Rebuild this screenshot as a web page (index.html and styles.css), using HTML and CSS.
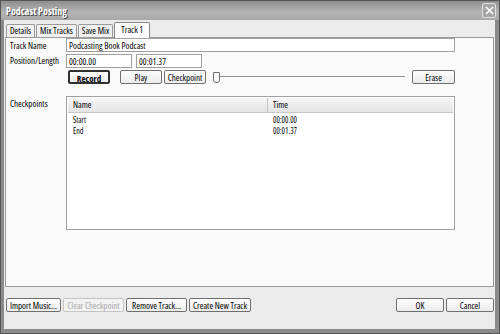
FILE: index.html
```html
<!DOCTYPE html>
<html lang="en">
<head>
  <meta charset="UTF-8">
  <title>Podcast Posting</title>
  <link rel="stylesheet" href="styles.css">
</head>
<body>
  <div class="window">
    <div class="titlebar">
      <span class="title">Podcast Posting</span>
      <span class="close">
        <svg width="9" height="9" viewBox="0 0 9 9"><path d="M1 1 L8 8 M8 1 L1 8" stroke="#fff" stroke-width="1.6"/></svg>
      </span>
    </div>
    <div class="client">
      <div class="tabs">
        <span class="tab">Details</span>
        <span class="tab">Mix Tracks</span>
        <span class="tab">Save Mix</span>
        <span class="tab active">Track 1</span>
      </div>
      <div class="panel">
        <div class="row first">
          <label class="label mid">Track Name</label>
          <div class="field"><input class="text wide" value="Podcasting Book Podcast"></div>
        </div>
        <div class="row">
          <label class="label">Position/Length</label>
          <div class="field pair">
            <input class="text short" value="00:00.00">
            <input class="text short" value="00:01.37">
          </div>
        </div>
        <div class="row">
          <span class="label"></span>
          <div class="field controls">
            <button class="btn small default">Record</button>
            <button class="btn small play">Play</button>
            <button class="btn small">Checkpoint</button>
            <div class="slider">
              <span class="thumb"></span>
              <span class="track"></span>
            </div>
            <button class="btn small erase">Erase</button>
          </div>
        </div>
        <div class="row list-row">
          <label class="label list-label">Checkpoints</label>
          <div class="field">
            <div class="list">
              <div class="list-head">
                <span class="col-name">Name</span>
                <span class="col-time">Time</span>
              </div>
              <div class="list-item"><span class="col-name">Start</span><span class="col-time">00:00.00</span></div>
              <div class="list-item"><span class="col-name">End</span><span class="col-time">00:01.37</span></div>
            </div>
          </div>
        </div>
      </div>
      <div class="footer">
        <button class="btn w55">Import Music...</button>
        <button class="btn w61" disabled>Clear Checkpoint</button>
        <button class="btn w61">Remove Track...</button>
        <button class="btn w62">Create New Track</button>
        <span class="spacer"></span>
        <button class="btn dlg">OK</button>
        <button class="btn dlg">Cancel</button>
      </div>
    </div>
  </div>
</body>
</html>
```

FILE: styles.css
```css
html, body {
  margin: 0;
  padding: 0;
  background: #fff;
}
body {
  font-family: "Open Sans", "Liberation Sans", Arial, sans-serif;
  font-stretch: 80%;
  font-weight: 500;
  font-size: 9px;
  color: #000;
}
.window {
  width: 500px;
  height: 334px;
  box-sizing: border-box;
  display: flex;
  flex-direction: column;
  background: #8a8a8a;
  border: 1px solid #555;
}
.titlebar {
  height: 19px;
  flex: none;
  display: flex;
  align-items: center;
  justify-content: space-between;
  padding: 0 3px 0 5px;
  background: linear-gradient(#8f8f8f, #b4b4b4 60%, #a8a8a8);
}
.title {
  font-weight: bold;
  font-size: 10px;
  color: #fff;
  text-shadow: 1px 1px 0 #444;
}
.close {
  width: 12px;
  height: 13px;
  border: 1px solid #e0e0e0;
  border-radius: 2px;
  display: flex;
  align-items: center;
  justify-content: center;
  background: #a5a5a5;
}
/* client area */
.client {
  flex: 1;
  display: flex;
  flex-direction: column;
  margin: 0 4px 4px 3px;
  padding: 2px 1px 0 1px;
  background: #ebebeb;
}
.tabs {
  display: flex;
  align-items: flex-end;
  height: 15px;
  padding-left: 1px;
}
.tab {
  height: 12px;
  line-height: 12px;
  padding: 0 3px;
  margin-right: 1px;
  border: 1px solid #9a9a9a;
  border-bottom: none;
  border-radius: 2px 2px 0 0;
  background: #f0f0f0;
}
.tab.active {
  height: 15px;
  line-height: 14px;
  background: #fbfbfb;
  border-color: #888;
  position: relative;
  top: 1px;
  padding: 0 6px;
}
.panel {
  height: 250px;
  box-sizing: border-box;
  border: 1px solid #9a9a9a;
  background: #fafafa;
  padding: 0 37px 0 4px;
}
.row {
  display: flex;
  margin-top: 2px;
}
.row.first {
  margin-top: 0;
}
.label {
  width: 56px;
  flex: none;
  white-space: nowrap;
}
.label.mid {
  align-self: center;
}
.field {
  flex: 1;
}
.text {
  box-sizing: border-box;
  height: 14px;
  border: 1px solid #a0a0a0;
  background: #fff;
  font: inherit;
  color: #000;
  padding: 0 2px;
  margin: 0;
}
.wide {
  width: 389px;
}
.pair {
  display: flex;
  gap: 4px;
}
.short {
  width: 66px;
}
.controls {
  display: flex;
  align-items: center;
  padding-left: 2px;
}
.btn {
  box-sizing: border-box;
  height: 14px;
  padding: 0 2px;
  border: 1px solid #707070;
  border-radius: 2px;
  background: linear-gradient(#fdfdfd, #ececec);
  font: inherit;
  color: #000;
  margin: 0;
  white-space: nowrap;
}
.btn.small {
  width: 42px;
  padding: 0;
}
.btn.default {
  border: 2px solid #303030;
  font-weight: bold;
}
.btn.play {
  margin-left: 10px;
  margin-right: 2px;
}
.btn.erase {
  width: 43px;
}
.btn:disabled {
  color: #a8a8a8;
  border-color: #c4c4c4;
  background: #f2f2f2;
}
.slider {
  width: 192px;
  margin: 0 7px;
  display: flex;
  align-items: center;
}
.thumb {
  width: 5px;
  height: 9px;
  border: 1px solid #707070;
  border-radius: 0 0 3px 3px;
  background: #f8f8f8;
  flex: none;
}
.track {
  flex: 1;
  height: 0;
  border-top: 1px solid #909090;
  border-bottom: 1px solid #fff;
}
.list-row {
  margin-top: 12px;
}
.list-label {
  padding-top: 1px;
}
.list {
  width: 389px;
  height: 134px;
  box-sizing: border-box;
  border: 1px solid #a0a0a0;
  background: #fff;
}
.list-head {
  display: flex;
  height: 14px;
  line-height: 14px;
  background: linear-gradient(#f6f6f6, #e4e4e4);
  border-bottom: 1px solid #c8c8c8;
  margin: 1px;
}
.list-head .col-name {
  border-right: 1px solid #c4c4c4;
}
.list-item {
  display: flex;
  font-size: 8px;
  line-height: 11px;
  margin-left: 1px;
}
.col-name {
  box-sizing: border-box;
  width: 200px;
  padding-left: 5px;
}
.col-time {
  padding-left: 5px;
}
.footer {
  display: flex;
  gap: 2px;
  margin-top: 11px;
  padding-left: 1px;
}
.btn.w55 { width: 55px; }
.btn.w61 { width: 61px; }
.btn.w62 { width: 62px; }
.spacer {
  flex: 1;
}
.btn.dlg {
  width: 48px;
}
```
